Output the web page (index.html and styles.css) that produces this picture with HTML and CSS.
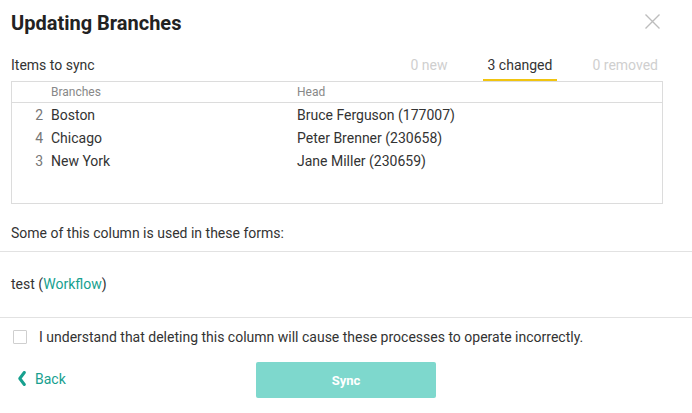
FILE: index.html
```html
<!DOCTYPE html>
<html>
<head>
<meta charset="utf-8">
<link rel="stylesheet" href="styles.css">
</head>
<body>
<div class="dialog">
  <div class="header">
    <h1 class="title">Updating Branches</h1>
    <button class="close" aria-label="Close">
      <svg width="15" height="15" viewBox="0 0 15 15"><path d="M0.5 0.5 L14.5 14.5 M14.5 0.5 L0.5 14.5" stroke="#bdbdbd" stroke-width="1.4" fill="none"/></svg>
    </button>
  </div>
  <div class="content">
    <div class="tabs-row">
      <div class="items-label">Items to sync</div>
      <div class="tabs">
        <span class="tab muted">0 new</span>
        <span class="tab active">3 changed</span>
        <span class="tab muted">0 removed</span>
      </div>
    </div>
    <div class="table">
      <div class="row head-row">
        <span class="num"></span>
        <span>Branches</span>
        <span>Head</span>
      </div>
      <div class="row">
        <span class="num">2</span>
        <span>Boston</span>
        <span>Bruce Ferguson (177007)</span>
      </div>
      <div class="row">
        <span class="num">4</span>
        <span>Chicago</span>
        <span>Peter Brenner (230658)</span>
      </div>
      <div class="row">
        <span class="num">3</span>
        <span>New York</span>
        <span>Jane Miller (230659)</span>
      </div>
    </div>
  </div>
  <div class="section forms-intro">Some of this column is used in these forms:</div>
  <div class="section forms-list">test (<a class="link" href="#">Workflow</a>)</div>
  <label class="confirm">
    <span class="checkbox"></span>
    <span>I understand that deleting this column will cause these processes to operate incorrectly.</span>
  </label>
  <div class="footer">
    <a class="back" href="#">
      <svg width="8" height="15" viewBox="0 0 8 15"><path d="M6.3 1.5 L1.8 7.5 L6.3 13.5" stroke="#17a08f" stroke-width="3" fill="none" stroke-linecap="round" stroke-linejoin="round"/></svg>
      <span>Back</span>
    </a>
    <button class="sync">Sync</button>
  </div>
</div>
</body>
</html>
```
FILE: styles.css
```css
* { box-sizing: border-box; }
html, body {
  margin: 0;
  padding: 0;
  background: #fff;
}
body {
  font-family: Roboto, "Liberation Sans", sans-serif;
  color: #333;
  font-size: 14px;
  width: 692px;
  height: 413px;
  overflow: hidden;
}
.dialog {
  display: flex;
  flex-direction: column;
}
.header {
  display: flex;
  justify-content: space-between;
  align-items: flex-start;
  padding: 11px 32px 0 11px;
  height: 50px;
}
.title {
  margin: 0;
  font-size: 20px;
  line-height: 24px;
  font-weight: 700;
  color: #222;
}
.close {
  border: 0;
  background: none;
  padding: 0;
  margin-top: 3px;
  width: 15px;
  height: 15px;
  display: block;
}
.close svg { display: block; }
.content {
  padding: 0 29px 0 11px;
}
.tabs-row {
  display: flex;
  justify-content: space-between;
  align-items: flex-end;
  height: 31px;
}
.items-label {
  line-height: 16px;
  padding-bottom: 8px;
}
.tabs {
  display: flex;
  gap: 30px;
}
.tab {
  line-height: 16px;
  padding: 0 5px 6px;
  border-bottom: 2px solid transparent;
}
.tab.muted { color: #cfcfcf; }
.tab.active {
  color: #333;
  border-bottom-color: #f1c40f;
}
.table {
  border: 1px solid #dcdcdc;
  height: 123px;
}
.row {
  display: grid;
  grid-template-columns: 39px 246px 1fr;
  height: 23px;
  align-items: center;
  line-height: 16px;
}
.row .num {
  text-align: right;
  padding-right: 8px;
  color: #777;
}
.head-row {
  height: 21px;
  font-size: 12px;
  color: #888;
  border-bottom: 1px solid #dcdcdc;
}
.section {
  padding: 0 11px;
  line-height: 16px;
  border-bottom: 1px solid #e2e2e2;
}
.forms-intro {
  padding-top: 21px;
  padding-bottom: 10px;
}
.forms-list {
  padding-top: 24px;
  padding-bottom: 25px;
}
.link {
  color: #17a08f;
  text-decoration: none;
}
.confirm {
  display: flex;
  align-items: center;
  gap: 12px;
  padding: 12px 13px 0;
  line-height: 14px;
}
.checkbox {
  width: 14px;
  height: 14px;
  border: 1px solid #cfcfcf;
  border-radius: 1px;
  flex: none;
}
.footer {
  display: flex;
  align-items: center;
  padding: 18px 0 0 18px;
}
.back {
  display: flex;
  align-items: center;
  gap: 9px;
  color: #17a08f;
  text-decoration: none;
  font-size: 14px;
  line-height: 16px;
  width: 238px;
  margin-bottom: 3px;
}
.back svg { display: block; }
.sync {
  width: 180px;
  height: 36px;
  border: 0;
  border-radius: 2px;
  background: #7ed8cd;
  color: #fff;
  font-family: Roboto, "Liberation Sans", sans-serif;
  font-weight: 700;
  font-size: 13px;
  padding: 0;
}
```
